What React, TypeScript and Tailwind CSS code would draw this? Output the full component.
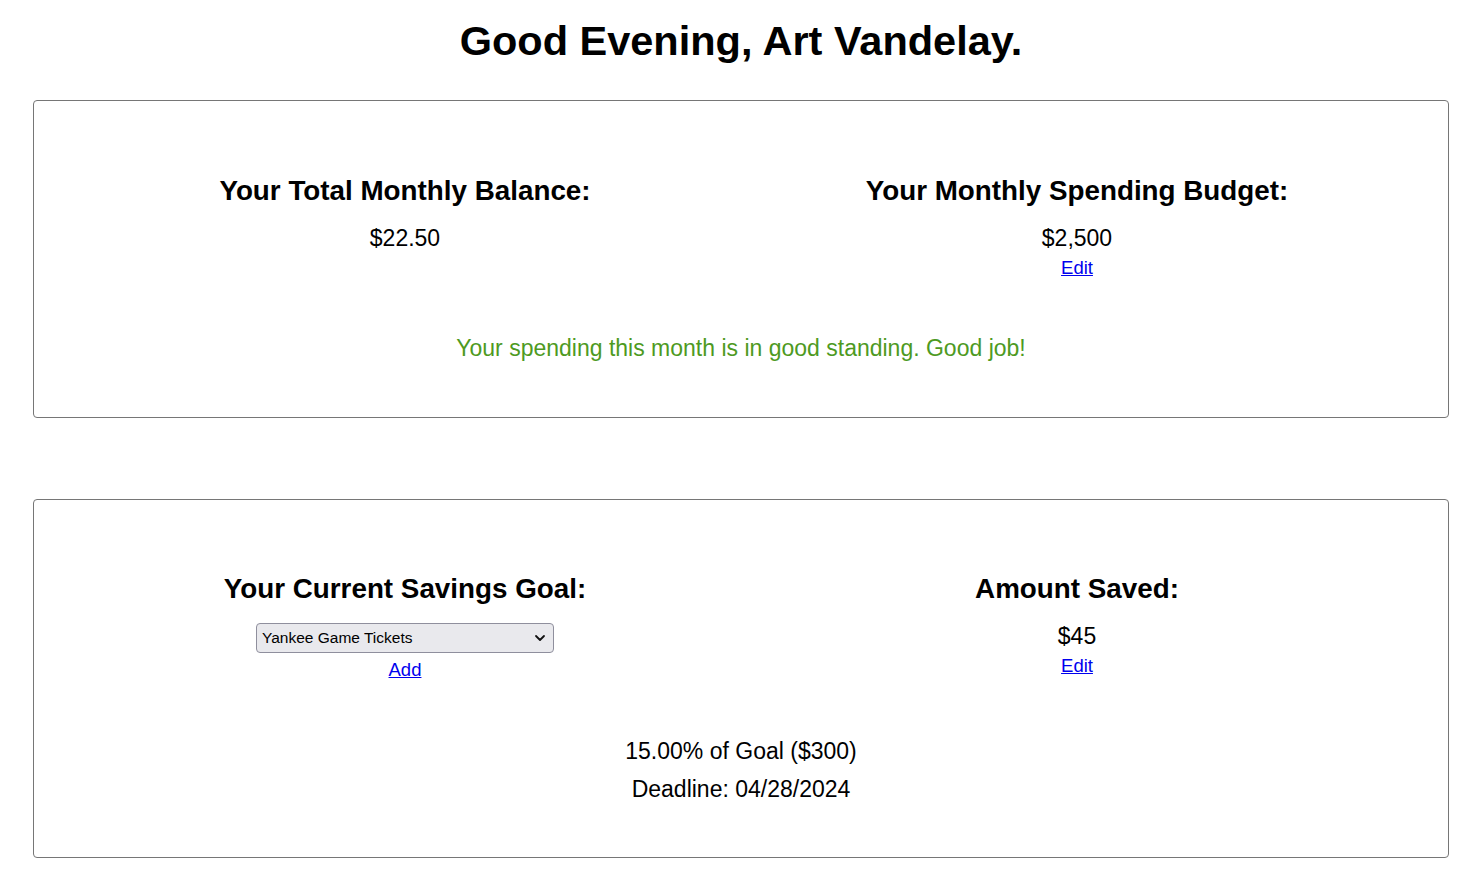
import React from "react";

const font = { fontFamily: '"Liberation Sans", Arial, sans-serif' };

function Stat({ title, value, link }: { title: string; value: string; link?: string }) {
  return (
    <div className="flex flex-1 flex-col items-center">
      <h2 className="text-[27.8px] font-bold leading-[32px]">{title}</h2>
      <p className="mt-[18px] text-[23px] leading-[26px]">{value}</p>
      {link && (
        <a href="#" className="mt-[6px] text-[18.5px] leading-[22px] text-[#0000ee] underline">
          {link}
        </a>
      )}
    </div>
  );
}

export default function App() {
  return (
    <div className="min-h-screen bg-white pb-[19px] text-black" style={font}>
      <h1 className="ml-[33px] mr-[30px] pt-[17px] text-center text-[41.5px] font-bold leading-[48px]">
        Good Evening, Art Vandelay.
      </h1>

      <div className="ml-[33px] mr-[30px] mt-[35px]">
        {/* Monthly balance card */}
        <section className="rounded border border-[#767676] px-[35px] pt-[74px] pb-[56px]">
          <div className="flex">
            <Stat title="Your Total Monthly Balance:" value="$22.50" />
            <Stat title="Your Monthly Spending Budget:" value="$2,500" link="Edit" />
          </div>
          <p className="mt-[56px] text-center text-[23px] leading-[26px] text-[#4e9a1f]">
            Your spending this month is in good standing. Good job!
          </p>
        </section>

        {/* Savings goal card */}
        <section className="mt-[81px] rounded border border-[#767676] px-[35px] pt-[73px] pb-[55px]">
          <div className="flex">
            <div className="flex flex-1 flex-col items-center">
              <h2 className="text-[27.8px] font-bold leading-[32px]">Your Current Savings Goal:</h2>
              <div className="relative mt-[18px]">
                <select
                  defaultValue="yankee"
                  className="h-[30px] w-[298px] appearance-none rounded border border-[#8f8f9d] bg-[#e9e9ed] pl-[5px] text-[15.5px]"
                >
                  <option value="yankee">Yankee Game Tickets</option>
                </select>
                <svg
                  className="pointer-events-none absolute right-[8px] top-[11px]"
                  width="12"
                  height="8"
                  viewBox="0 0 12 8"
                  fill="none"
                  stroke="#111"
                  strokeWidth="1.8"
                  strokeLinecap="round"
                  strokeLinejoin="round"
                >
                  <polyline points="2 2 6 6 10 2" />
                </svg>
              </div>
              <a href="#" className="mt-[6px] text-[18.5px] leading-[22px] text-[#0000ee] underline">
                Add
              </a>
            </div>
            <Stat title="Amount Saved:" value="$45" link="Edit" />
          </div>
          <p className="mt-[57px] text-center text-[23px] leading-[26px]">15.00% of Goal ($300)</p>
          <p className="mt-[12px] text-center text-[23px] leading-[26px]">Deadline: 04/28/2024</p>
        </section>
      </div>
    </div>
  );
}
